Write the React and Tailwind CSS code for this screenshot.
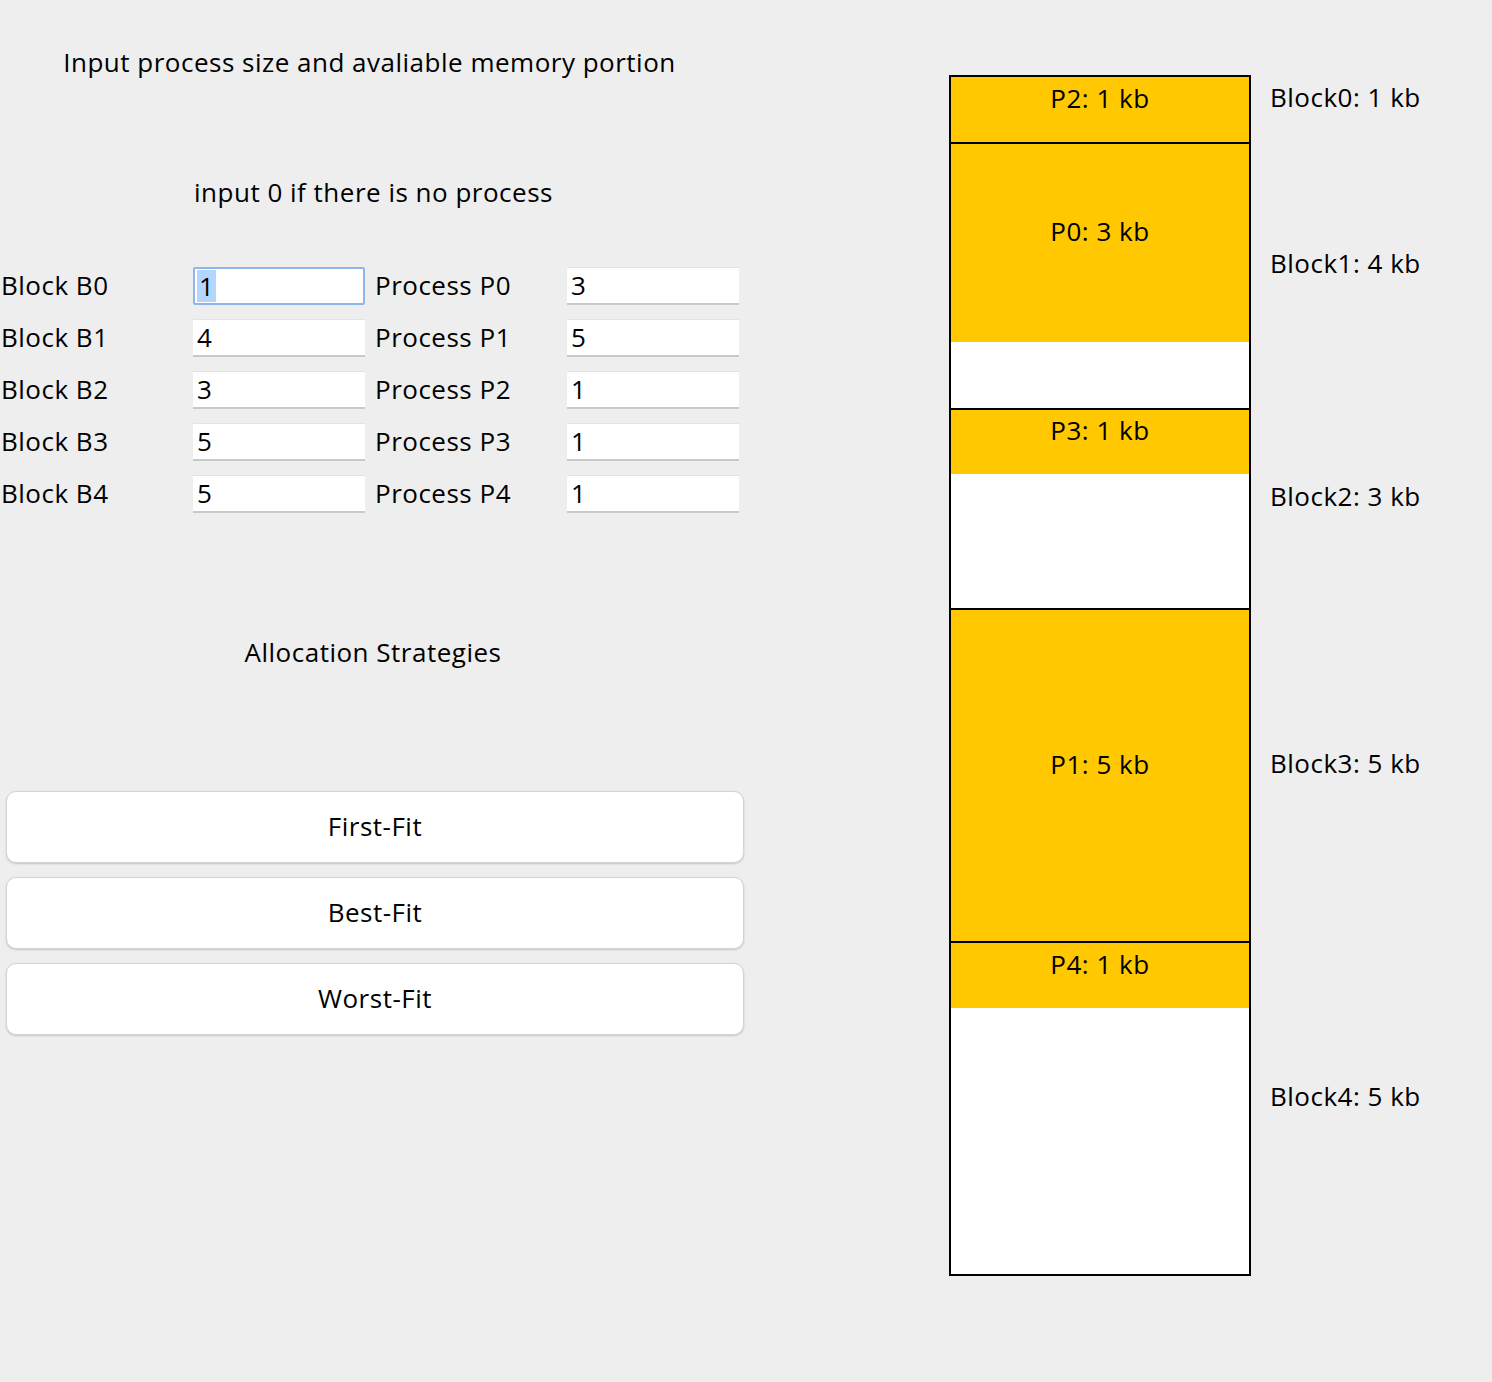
const blocks = [
  { name: 'Block0: 1 kb', h: 'h-[65px]', fill: 'h-[65px]', label: 'P2: 1 kb' },
  { name: 'Block1: 4 kb', h: 'h-[264px]', fill: 'h-[198px]', label: 'P0: 3 kb' },
  { name: 'Block2: 3 kb', h: 'h-[198px]', fill: 'h-[64px]', label: 'P3: 1 kb' },
  { name: 'Block3: 5 kb', h: 'h-[331px]', fill: 'h-[331px]', label: 'P1: 5 kb' },
  { name: 'Block4: 5 kb', h: 'h-[331px]', fill: 'h-[65px]', label: 'P4: 1 kb' },
];

const labelRows = ['h-[67px]', 'h-[266px]', 'h-[200px]', 'h-[333px]', 'h-[333px]'];

const rows = [
  { b: 'Block B0', bv: '1', p: 'Process P0', pv: '3', focused: true },
  { b: 'Block B1', bv: '4', p: 'Process P1', pv: '5' },
  { b: 'Block B2', bv: '3', p: 'Process P2', pv: '1' },
  { b: 'Block B3', bv: '5', p: 'Process P3', pv: '1' },
  { b: 'Block B4', bv: '5', p: 'Process P4', pv: '1' },
];

function Field({ value, focused }) {
  if (focused) {
    return (
      <div className="w-[172px] h-[38px] bg-white border-2 border-[#8db6ee] rounded-[2px] flex items-center pl-[2px]">
        <span className="bg-[#b4d5fe] px-[2px] leading-[32px]">{value}</span>
      </div>
    );
  }
  return (
    <div className="w-[172px] h-[38px] bg-white border-t border-[#e3e3e3] border-b-2 border-b-[#c9c9c9] flex items-center pl-[4px]">
      {value}
    </div>
  );
}

function StrategyButton({ children }) {
  return (
    <button className="w-[738px] h-[72px] bg-white rounded-[10px] border border-[#d4d4d4] shadow-[0_1px_2px_rgba(0,0,0,0.18)] text-[26px] tracking-[0.5px] text-black pb-[2px]">
      {children}
    </button>
  );
}

export default function App() {
  return (
    <div
      className="w-[1492px] h-[1382px] bg-[#eeeeee] text-black text-[26px] tracking-[0.5px] flex"
      style={{ fontFamily: '"Open Sans", "Noto Sans", sans-serif' }}
    >
      {/* left: inputs */}
      <div className="w-[750px] flex flex-col">
        <div className="mt-[46px] w-[739px] leading-[32px] text-center">
          Input process size and avaliable memory portion
        </div>
        <div className="mt-[98px] w-[747px] leading-[32px] text-center">
          input 0 if there is no process
        </div>
        <div className="mt-[52px] flex flex-col">
          {rows.map((r) => (
            <div key={r.b} className="h-[52px] flex items-center">
              <div className="w-[193px] pl-[1px] pb-[2px]">{r.b}</div>
              <Field value={r.bv} focused={r.focused} />
              <div className="w-[202px] pl-[10px] pb-[2px]">{r.p}</div>
              <Field value={r.pv} />
            </div>
          ))}
        </div>
        <div className="mt-[116px] w-[746px] leading-[32px] text-center">
          Allocation Strategies
        </div>
        <div className="mt-[123px] ml-[6px] flex flex-col gap-[14px]">
          <StrategyButton>First-Fit</StrategyButton>
          <StrategyButton>Best-Fit</StrategyButton>
          <StrategyButton>Worst-Fit</StrategyButton>
        </div>
      </div>

      {/* right: memory map */}
      <div className="ml-[199px] mt-[75px] w-[302px] h-[1201px] border-2 border-black bg-white flex flex-col">
        {blocks.map((b, i) => (
          <div key={b.name} className={`${b.h} ${i > 0 ? 'border-t-2 border-black box-content' : ''} flex flex-col`}>
            <div className={`${b.fill} bg-[#ffc800] flex items-center justify-center pb-[23px]`}>
              {b.label}
            </div>
          </div>
        ))}
      </div>

      <div className="ml-[19px] mt-[75px] flex flex-col">
        {labelRows.map((h, i) => (
          <div key={i} className={`${h} flex items-center pb-[23px] whitespace-nowrap`}>
            {blocks[i].name}
          </div>
        ))}
      </div>
    </div>
  );
}
